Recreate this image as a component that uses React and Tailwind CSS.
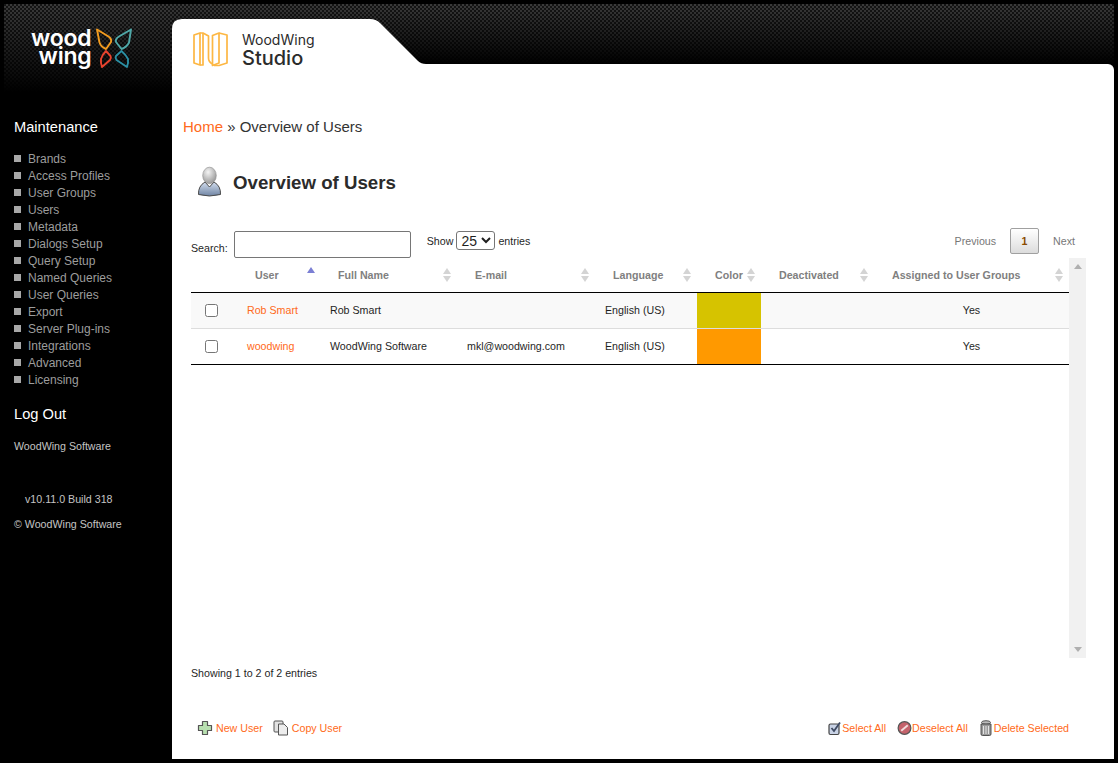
const MENU = ['Brands', 'Access Profiles', 'User Groups', 'Users', 'Metadata', 'Dialogs Setup', 'Query Setup', 'Named Queries', 'User Queries', 'Export', 'Server Plug-ins', 'Integrations', 'Advanced', 'Licensing'];

const ROWS = [
  { user: 'Rob Smart', name: 'Rob Smart', mail: '', color: 'bg-[#d6c300]', rowBg: 'bg-[#f9f9f9]', line: 'border-[#dddddd]' },
  { user: 'woodwing', name: 'WoodWing Software', mail: 'mkl@woodwing.com', color: 'bg-[#ff9900]', rowBg: 'bg-white', line: 'border-black' },
];

const CARBON = 'bg-[linear-gradient(to_bottom,transparent_0%,#000_100%),repeating-conic-gradient(#3a3a3a_0_25%,#141414_0_50%)] bg-[length:100%_100%,4px_4px]';

function SortIcon({ active }) {
  return (
    <svg width="10" height="16" viewBox="0 0 10 16" className="shrink-0">
      <path d="M5 1 L9 7 L1 7 Z" fill={active ? '#7b7fd4' : '#d4d4d4'} />
      {!active && <path d="M1 9 L9 9 L5 15 Z" fill="#d4d4d4" />}
    </svg>
  );
}

function WoodWingLogo() {
  return (
    <div className="flex items-center">
      <div className="flex flex-col items-end pb-[2px] font-['Inter',sans-serif] font-semibold text-white text-[23px] leading-[18px] tracking-[-0.2px]">
        <span>wood</span>
        <span>wing</span>
      </div>
      <svg width="38" height="42" viewBox="0 0 38 42" fill="none" strokeWidth="1.9" strokeLinejoin="round" className="ml-[3px]">
        <path d="M2 2.5 L13.5 9.5 Q17 12 16 15 L11 22 Q6 20 4.5 15.5 Z" stroke="#f39c1f" />
        <path d="M11 24 L15.5 29 Q16.5 31 15 33 L7 40 Q5.5 36 6 32 Q7 28 11 24 Z" stroke="#e8432e" />
        <path d="M36 2.5 L24 9.5 Q20 12 21 15 L26.5 22 Q32 20 34 15.5 Z" stroke="#4fa8a8" />
        <path d="M26.5 24 L21 29 Q20 31 21.5 33 L32 40 Q33.5 36 33 32 Q31 28 26.5 24 Z" stroke="#2b8fa3" />
      </svg>
    </div>
  );
}

function StudioLogo() {
  return (
    <div className="flex items-center">
      <svg width="36" height="36" viewBox="0 0 36 36" fill="none" stroke="#fdb743" strokeWidth="1.7" strokeLinejoin="round">
        <path d="M1 3 L7 1 L7 33 L1 31 Z" />
        <path d="M7 1 L10 1 L15.5 4 L15.5 26 Q15.5 30 19.5 32" />
        <path d="M10 1 L10 33 L7 33" />
        <path d="M19.5 3.5 L19.5 33.5 L26 31 L26 1 Z" />
        <path d="M26 1 L34 3 L34 31 L26 33.5 L21 33.5" />
      </svg>
      <div className="ml-[13px] flex flex-col text-[#2b2b2b] font-['Inter',sans-serif]">
        <span className="text-[14px] leading-[16px]">WoodWing</span>
        <span className="text-[20px] leading-[20px] font-medium">Studio</span>
      </div>
    </div>
  );
}

function UserIcon() {
  return (
    <svg width="26" height="32" viewBox="0 0 26 32">
      <defs>
        <radialGradient id="head" cx="0.4" cy="0.3" r="0.8">
          <stop offset="0" stopColor="#f4f4f4" />
          <stop offset="1" stopColor="#8c8c8c" />
        </radialGradient>
        <linearGradient id="torso" x1="0" y1="0" x2="0" y2="1">
          <stop offset="0" stopColor="#d3deef" />
          <stop offset="1" stopColor="#6f84a3" />
        </linearGradient>
      </defs>
      <path d="M1.5 28.5 Q1 20 8 16 L12.5 21 L17 16 Q24 20 23.5 28.5 Q12.5 31.5 1.5 28.5 Z" fill="url(#torso)" stroke="#4a4a4a" strokeWidth="1" />
      <ellipse cx="12.5" cy="9.5" rx="6.8" ry="8.3" fill="url(#head)" stroke="#8a8a8a" strokeWidth="0.6" />
    </svg>
  );
}

function PlusIcon() {
  return (
    <svg width="16" height="16" viewBox="0 0 16 16">
      <path d="M5.5 1.5 H10.5 V5.5 H14.5 V10.5 H10.5 V14.5 H5.5 V10.5 H1.5 V5.5 H5.5 Z" fill="#b8e0b0" stroke="#555" strokeWidth="1.2" strokeLinejoin="round" />
    </svg>
  );
}

function CopyIcon() {
  return (
    <svg width="16" height="16" viewBox="0 0 16 16">
      <rect x="1" y="1" width="9" height="11" rx="1" fill="#e2e2e2" stroke="#555" strokeWidth="1" />
      <path d="M5.5 4 H11 L14.5 7.5 V15 H5.5 Z" fill="#ededed" stroke="#555" strokeWidth="1" strokeLinejoin="round" />
    </svg>
  );
}

function CheckIcon() {
  return (
    <svg width="13" height="15" viewBox="0 0 13 15">
      <rect x="1" y="3" width="10" height="10.5" rx="1.5" fill="#c9d3e6" stroke="#444" strokeWidth="1.2" />
      <path d="M3.5 7 L6 10 L12 1.5" fill="none" stroke="#3e4a63" strokeWidth="1.8" />
    </svg>
  );
}

function DeselectIcon() {
  return (
    <svg width="15" height="16" viewBox="0 0 16 16">
      <circle cx="8" cy="8" r="6.8" fill="#c4626b" stroke="#555" strokeWidth="1.3" />
      <path d="M4.5 11 L11.5 5" stroke="#f3dede" strokeWidth="2" />
    </svg>
  );
}

function TrashIcon() {
  return (
    <svg width="12" height="16" viewBox="0 0 12 16">
      <ellipse cx="6" cy="2.5" rx="4.5" ry="1.8" fill="#bbb" stroke="#444" strokeWidth="0.9" />
      <path d="M1 4 H11 V14 Q11 15.5 9.5 15.5 H2.5 Q1 15.5 1 14 Z" fill="#9a9a9a" stroke="#444" strokeWidth="0.9" />
      <path d="M3.5 6 V14 M6 6 V14 M8.5 6 V14" stroke="#e4e4e4" strokeWidth="1" />
    </svg>
  );
}

function ActionLink({ icon, label, gap = 'gap-[3px]' }) {
  return (
    <span className={`flex items-center ${gap} text-[#ff6a20]`}>
      {icon}
      {label}
    </span>
  );
}

function HeadCell({ label, pl, pr = 'pr-[5px]' }) {
  return (
    <th className="p-0 font-bold">
      <div className={`flex items-center justify-between pt-[1px] ${pl} ${pr}`}>
        <span>{label}</span>
        <SortIcon />
      </div>
    </th>
  );
}

export default function App() {
  return (
    <div className="w-[1118px] h-[763px] overflow-hidden bg-black p-1 flex font-['Liberation_Sans',Arial,sans-serif]">
      {/* Sidebar */}
      <aside className="w-[168px] shrink-0">
        <div className={`h-[88px] pl-[27px] pt-[23px] ${CARBON}`}>
          <WoodWingLogo />
        </div>
        <div className="pl-[10px]">
          <div className="mt-[26px] h-[18px] leading-[18px] text-[14.67px] text-white">Maintenance</div>
          <ul className="mt-[14px]">
            {MENU.map((item) => (
              <li key={item} className="h-[17px] flex items-center gap-[7px] text-[12px] text-[#9d9d9d]">
                <span className="w-[7px] h-[7px] bg-[#a8a8a8]" />
                {item}
              </li>
            ))}
          </ul>
          <div className="mt-[17px] h-[18px] leading-[18px] text-[14.67px] text-white">Log Out</div>
          <div className="mt-[16px] h-[14px] leading-[14px] text-[10.67px] text-[#c4c4c4]">WoodWing Software</div>
          <div className="mt-[39px] h-[14px] leading-[14px] text-[10.67px] text-[#c4c4c4] pl-[11px]">v10.11.0 Build 318</div>
          <div className="mt-[11px] h-[14px] leading-[14px] text-[10.67px] text-[#c4c4c4]">© WoodWing Software</div>
        </div>
      </aside>

      {/* Main */}
      <main className="flex-1 min-w-0 flex flex-col">
        <header className={`h-[60px] shrink-0 pt-[15px] ${CARBON}`}>
          <div className="relative w-[254px] h-[45px] pl-[21px] pt-[13px]">
            <div className="absolute inset-0 bg-white [clip-path:path('M0_45L0_10Q0_0_10_0L198_0Q204_0_208_4L246_42Q249_45_254_45Z')]" />
            <div className="relative">
              <StudioLogo />
            </div>
          </div>
        </header>

        <section className="flex-1 bg-white rounded-tr-[6px] pl-[19px] pr-[28px] text-[10.67px] text-[#1f1f1f]">
          <div className="-ml-[8px] mt-[54px] h-[18px] leading-[18px] text-[15px] text-[#333]">
            <span className="text-[#ff6a20]">Home</span> » Overview of Users
          </div>

          <div className="mt-[31px] h-[30px] flex items-center pl-[6px] gap-[10px]">
            <UserIcon />
            <h1 className="pt-[1px] text-[18.67px] font-bold text-[#2b2b2b]">Overview of Users</h1>
          </div>

          <div className="mt-[34px] h-[27px] flex items-start mr-[11px]">
            <label className="flex items-end h-full gap-[6px]">
              <span className="leading-[14px] mb-[3px]">Search:</span>
              <input className="w-[177px] h-[27px] border border-[#767676] rounded-[2px]" />
            </label>
            <div className="ml-[16px] flex items-center gap-[3px]">
              <span className="pt-[1px]">Show</span>
              <select className="w-[39px] h-[19px] border border-[#767676] rounded-[3px] text-[14px]">
                <option>25</option>
              </select>
              <span className="pt-[1px]">entries</span>
            </div>
            <div className="ml-auto -mt-[3px] flex items-center gap-[14px] text-[#777]">
              <span>Previous</span>
              <span className="w-[29px] h-[26px] flex items-center justify-center border border-[#a0a0a0] rounded-[2px] bg-gradient-to-b from-white to-[#dcdcdc] font-bold text-[#8a4b00]">1</span>
              <span>Next</span>
            </div>
          </div>

          <div className="h-[400px] flex">
            <div className="w-[878px] shrink-0">
              <table className="w-full table-fixed border-collapse">
                <colgroup>
                  <col className="w-[49px]" />
                  <col className="w-[80px]" />
                  <col className="w-[137px]" />
                  <col className="w-[139px]" />
                  <col className="w-[101px]" />
                  <col className="w-[64px]" />
                  <col className="w-[113px]" />
                  <col className="w-[195px]" />
                </colgroup>
                <thead>
                  <tr className="h-[34px] border-b border-black text-[#808080] font-bold">
                    <th />
                    <th className="p-0 font-bold">
                      <div className="flex items-center justify-between pt-[1px] pl-[15px] pr-[4px]">
                        <span>User</span>
                        <span className="-mt-[2px]"><SortIcon active /></span>
                      </div>
                    </th>
                    <HeadCell label="Full Name" pl="pl-[18px]" />
                    <HeadCell label="E-mail" pl="pl-[18px]" pr="pr-[6px]" />
                    <HeadCell label="Language" pl="pl-[17px]" />
                    <HeadCell label="Color" pl="pl-[18px]" />
                    <HeadCell label="Deactivated" pl="pl-[18px]" />
                    <HeadCell label="Assigned to User Groups" pl="pl-[18px]" />
                  </tr>
                </thead>
                <tbody>
                  {ROWS.map((r) => (
                    <tr key={r.user} className={`h-[36px] border-b ${r.line} ${r.rowBg}`}>
                      <td className="p-0 pl-[14px] align-middle"><input type="checkbox" className="block" /></td>
                      <td className="p-0 pl-[7px] text-[#ff6a20]">{r.user}</td>
                      <td className="p-0 pl-[10px]">{r.name}</td>
                      <td className="p-0 pl-[10px]">{r.mail}</td>
                      <td className="p-0 pl-[9px]">English (US)</td>
                      <td className={`p-0 ${r.color}`} />
                      <td className="p-0" />
                      <td className="p-0 text-center">Yes</td>
                    </tr>
                  ))}
                </tbody>
              </table>
            </div>
            <div className="w-[17px] bg-[#f1f1f1] flex flex-col justify-between items-center pt-[6px] pb-[6px]">
              <svg width="8" height="5" viewBox="0 0 8 5"><path d="M4 0 L8 5 L0 5 Z" fill="#b0b0b0" /></svg>
              <svg width="8" height="5" viewBox="0 0 8 5"><path d="M0 0 L8 0 L4 5 Z" fill="#b0b0b0" /></svg>
            </div>
          </div>

          <div className="mt-[8px] h-[14px] leading-[14px]">Showing 1 to 2 of 2 entries</div>

          <div className="mt-[41px] h-[14px] w-[878px] flex items-center pl-[6px]">
            <ActionLink icon={<PlusIcon />} label="New User" />
            <span className="ml-[10px]"><ActionLink icon={<CopyIcon />} label="Copy User" /></span>
            <div className="ml-auto flex items-center gap-[11px]">
              <ActionLink icon={<CheckIcon />} label="Select All" gap="gap-[1px]" />
              <ActionLink icon={<DeselectIcon />} label="Deselect All" gap="gap-0" />
              <span className="ml-[1px]"><ActionLink icon={<TrashIcon />} label="Delete Selected" gap="gap-[2px]" /></span>
            </div>
          </div>
        </section>
      </main>
    </div>
  );
}
